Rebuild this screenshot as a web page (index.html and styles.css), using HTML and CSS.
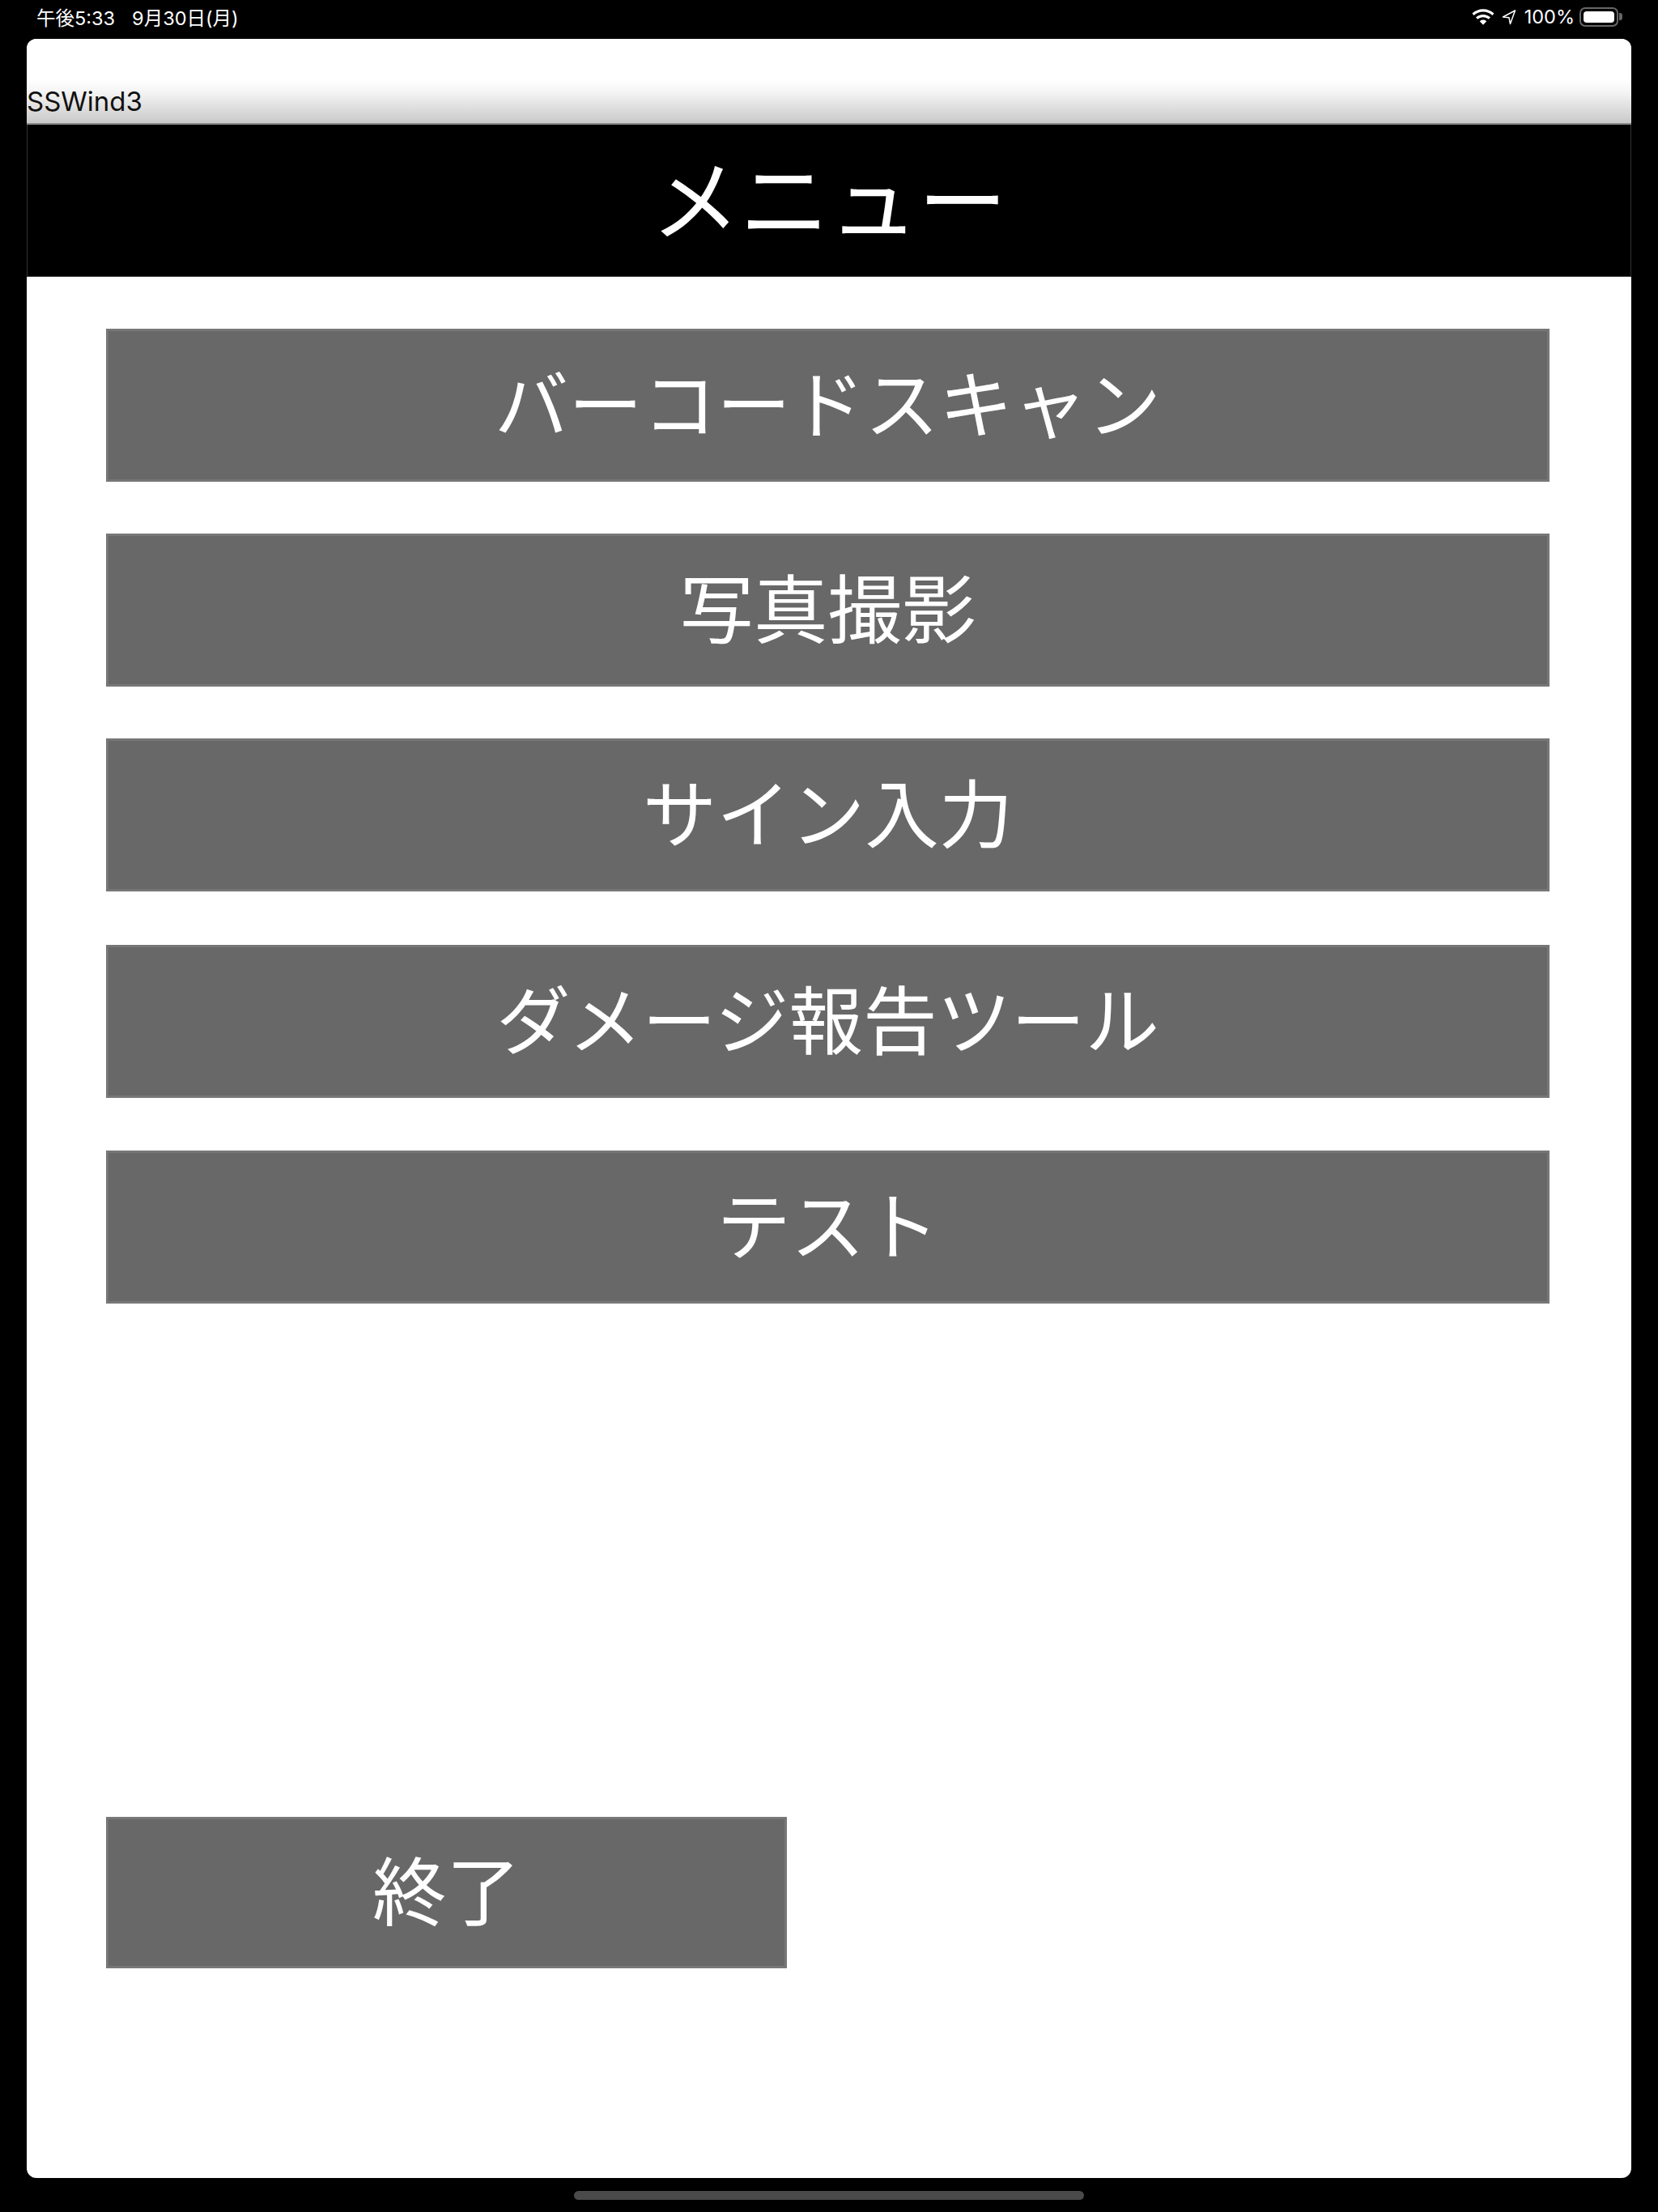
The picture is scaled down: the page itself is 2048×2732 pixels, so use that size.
FILE: index.html
```html
<!DOCTYPE html>
<html lang="ja">

<head>
	<meta charset="UTF-8">
	<title>SSWind3</title>
	<link rel="stylesheet" href="styles.css">
</head>

<body>
	<div class="status-bar">
		<div class="status-time"><span>午後5:33</span><span>9月30日(月)</span></div>
		<div class="status-icons">
			<svg class="wifi-icon" viewBox="2 1.200 22 16">
				<path d="M13 4c3.500 0 6.700 1.300 9.100 3.500l1.700-1.900C20.900 3 17.100 1.400 13 1.400S5.100 3 2.200 5.600l1.700 1.900C6.300 5.300 9.500 4 13 4z" fill="#fff"/>
				<path d="M13 9.300c2.100 0 4 .8 5.400 2.100l1.800-1.900C18.300 7.700 15.800 6.700 13 6.700s-5.300 1-7.200 2.800l1.800 1.900c1.400-1.300 3.300-2.100 5.400-2.100z" fill="#fff"/>
				<path d="M13 12c-1.300 0-2.500.5-3.400 1.300L13 17l3.400-3.700C15.500 12.500 14.300 12 13 12z" fill="#fff"/>
			</svg>
			<svg class="location-icon" viewBox="0 0 18 20">
				<path d="M16.500 2 1.500 10l7.500.8 1.500 7.700z" fill="none" stroke="#fff" stroke-width="1.500" stroke-linejoin="round"/>
			</svg>
			<span class="battery-text">100%</span>
			<div class="battery"><div class="battery-fill"></div></div>
			<div class="battery-tip"></div>
		</div>
	</div>

	<main class="panel">
		<div class="title-bar">SSWind3</div>
		<h1 class="menu-header">メニュー</h1>
		<div class="menu-list">
			<button class="menu-button">バーコードスキャン</button>
			<button class="menu-button">写真撮影</button>
			<button class="menu-button">サイン入力</button>
			<button class="menu-button damage-button">ダメージ報告ツール</button>
			<button class="menu-button test-button">テスト</button>
		</div>
		<button class="menu-button end-button">終了</button>
	</main>

	<div class="home-indicator"></div>
</body>

</html>
```

FILE: styles.css
```css
* {
	box-sizing: border-box;
}

html,
body {
	margin: 0;
	height: 2732px;
}

body {
	width: 2048px;
	background-color: #000;
	font-family: "Noto Sans CJK JP", "Noto Sans", sans-serif;
	overflow: hidden;
}

.status-bar {
	height: 48px;
	padding: 0 44px 0 45px;
	display: flex;
	justify-content: space-between;
	align-items: center;
	color: #fff;
	font-family: Inter, "Noto Sans CJK JP", sans-serif;
	font-size: 23.5px;
}

.status-time {
	display: flex;
	gap: 21px;
	margin-top: -7px;
}

.status-icons {
	display: flex;
	align-items: center;
	margin-top: -7px;
}

.wifi-icon {
	width: 28px;
	height: 20px;
	margin-right: 9px;
}

.location-icon {
	width: 18px;
	height: 20px;
	margin-right: 10px;
}

.battery-text {
	margin-right: 6px;
}

.battery {
	width: 48px;
	height: 24px;
	padding: 3px;
	border: 2px solid #666;
	border-radius: 7px;
}

.battery-fill {
	height: 100%;
	background-color: #fff;
	border-radius: 4px;
}

.battery-tip {
	width: 4px;
	height: 9px;
	margin-left: 1px;
	background-color: #666;
	border-radius: 0 3px 3px 0;
}

.panel {
	width: 1982px;
	height: 2642px;
	margin-left: 33px;
	background-color: #fff;
	border-radius: 12px;
	overflow: hidden;
}

.title-bar {
	height: 106px;
	padding-top: 57px;
	color: #111;
	font-family: Inter, "Liberation Sans", sans-serif;
	font-size: 33px;
	line-height: 40px;
	background: linear-gradient(#fff 50px, #f4f4f4 66px, #c9c9c9 104px);
	border-bottom: 2px solid #8a8a8a;
}

.menu-header {
	height: 188px;
	margin: 0;
	color: #fff;
	background-color: #000;
	border-left: 1px solid #333;
	border-right: 1px solid #333;
	border-bottom: 1px solid #444;
	font-size: 110px;
	font-weight: 400;
	line-height: 175px;
	text-align: center;
}

.menu-list {
	padding: 64px 101px 0 98px;
	display: flex;
	flex-direction: column;
	gap: 64px;
}

.menu-button {
	display: block;
	width: 100%;
	height: 189px;
	padding: 0 0 11px;
	color: #fff;
	background-color: #686868;
	border: 3px solid #777;
	font-family: "Noto Sans CJK JP", "Noto Sans", sans-serif;
	font-size: 91.5px;
	font-weight: 400;
	line-height: 1;
}

.damage-button {
	margin-top: 2px;
}

.test-button {
	margin-top: 1px;
}

.end-button {
	width: 841px;
	height: 187px;
	margin: 634px 0 0 98px;
}

.home-indicator {
	width: 630px;
	height: 11px;
	margin: 16px 0 0 709px;
	background-color: #4a4a4a;
	border-radius: 6px;
}
```
